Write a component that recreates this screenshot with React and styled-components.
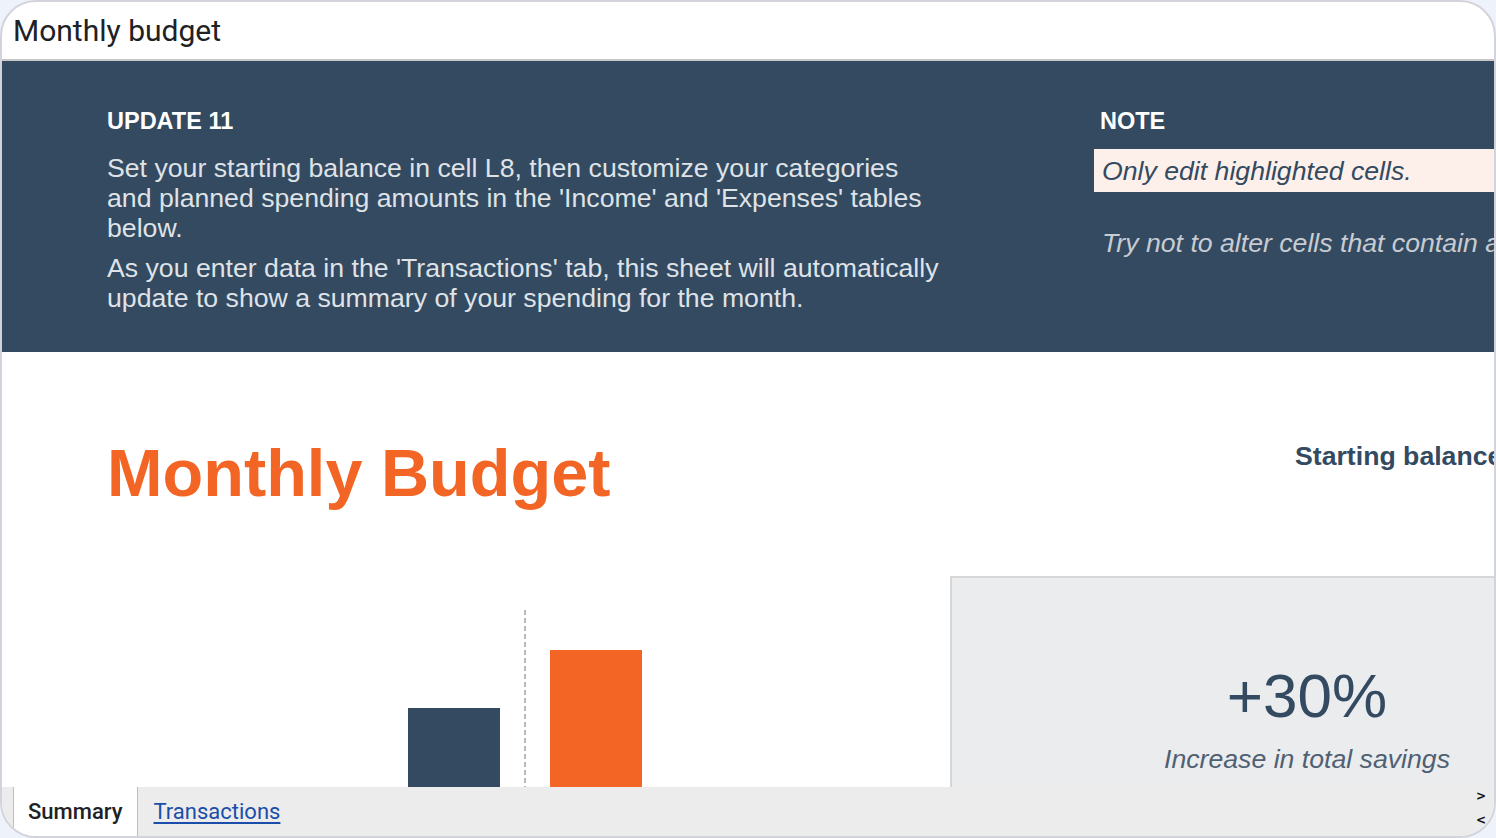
import React from "react";
import styled, { createGlobalStyle } from "styled-components";

const GlobalStyle = createGlobalStyle`
  html, body {
    margin: 0;
    padding: 0;
    background: #eef2fb;
  }
  * {
    box-sizing: border-box;
  }
`;

const NAVY = "#334a61";
const ORANGE = "#f36524";

const Frame = styled.div`
  width: 1496px;
  height: 838px;
  border: 2px solid #d3d3db;
  border-radius: 36px;
  overflow: hidden;
  background: #fff;
  display: flex;
  flex-direction: column;
  font-family: "Liberation Sans", Arial, sans-serif;
`;

const TitleBar = styled.div`
  flex: 0 0 59px;
  border-bottom: 2px solid #c8c8c8;
  padding-left: 11px;
  font-family: Roboto, "Liberation Sans", sans-serif;
  font-size: 30px;
  line-height: 57px;
  color: #202124;
`;

const Sheet = styled.div`
  flex: 1;
  min-height: 0;
  overflow: hidden;
  display: flex;
  flex-direction: column;
`;

const Banner = styled.section`
  flex: 0 0 291px;
  background: ${NAVY};
  padding: 46px 0 0 105px;
  display: grid;
  grid-template-columns: 835px 1fr;
  column-gap: 152px;
  overflow: hidden;
`;

const BannerCol = styled.div`
  min-width: 0;
  overflow: hidden;
`;

const BannerHeading = styled.h2`
  margin: 0 0 ${(p) => p.$gap}px ${(p) => p.$indent || 0}px;
  font-size: 23.5px;
  line-height: 28px;
  font-weight: 700;
  color: #fff;
`;

const Paragraph = styled.p`
  margin: 0 0 10px;
  font-size: 26.67px;
  line-height: 30px;
  color: #dfe2e6;
`;

const Highlight = styled.div`
  background: #fdf0eb;
  padding: 5px 0 4px 8px;
  font-size: 26.67px;
  line-height: 34px;
  font-style: italic;
  color: ${NAVY};
  white-space: nowrap;
`;

const NoteText = styled.div`
  margin-top: 36px;
  padding-left: 8px;
  font-size: 26.67px;
  line-height: 30px;
  font-style: italic;
  color: #c8ccd2;
  white-space: nowrap;
`;

const Body = styled.section`
  flex: 1;
  display: flex;
  min-height: 0;
`;

const LeftCol = styled.div`
  flex: 0 0 948px;
  padding-top: 88px;
`;

const RightCol = styled.div`
  flex: 1;
  min-width: 0;
  overflow: hidden;
  padding-top: 91px;
`;

const Title = styled.h1`
  margin: 0 0 0 105px;
  font-size: 66.67px;
  line-height: 1;
  font-weight: 700;
  color: ${ORANGE};
`;

const Chart = styled.div`
  margin-top: 103px;
  height: 300px;
  padding-left: 406px;
  display: flex;
  align-items: flex-end;
  gap: 24px;
`;

const Bar = styled.div`
  width: 92px;
  height: ${(p) => p.$height}px;
  background: ${(p) => p.$color};
`;

const Divider = styled.div`
  align-self: stretch;
  width: 2px;
  background: repeating-linear-gradient(
    to bottom,
    #b9b9b9 0 5px,
    transparent 5px 8px
  );
`;

const StartLabel = styled.div`
  padding-left: 345px;
  font-size: 26.67px;
  line-height: 1;
  font-weight: 700;
  color: ${NAVY};
  white-space: nowrap;
`;

const Card = styled.div`
  margin-top: 106px;
  width: 712px;
  height: 300px;
  background: #ebecee;
  border-top: 2px solid #d6d6d6;
  border-left: 2px solid #d6d6d6;
  padding-top: 87px;
  text-align: center;
  color: ${NAVY};
`;

const BigStat = styled.div`
  font-size: 62px;
  line-height: 1;
`;

const StatCaption = styled.div`
  margin-top: 19px;
  font-size: 26.67px;
  line-height: 1;
  font-style: italic;
  color: #4f6073;
`;

const TabBar = styled.nav`
  flex: 0 0 49px;
  background: #ececec;
  display: flex;
  align-items: stretch;
  padding-left: 11px;
  font-family: Roboto, "Liberation Sans", sans-serif;
  font-size: 22px;
  line-height: 49px;
`;

const Tab = styled.div`
  background: #fff;
  border-left: 1px solid #bdbdbd;
  border-right: 1px solid #bdbdbd;
  padding: 0 14px;
  font-weight: 500;
  color: #202124;
`;

const TabLink = styled.a`
  margin-left: 16px;
  color: #1a4eaa;
  text-decoration: underline;
  text-underline-offset: 3px;
`;

const Scroller = styled.div`
  margin-left: auto;
  padding: 3px 8px 0 0;
  display: flex;
  flex-direction: column;
  gap: 12px;
  font-family: "DejaVu Sans", sans-serif;
  font-size: 12px;
  font-weight: 700;
  line-height: 12px;
  color: #111;
`;

export default function App() {
  return (
    <>
      <GlobalStyle />
      <Frame>
        <TitleBar>Monthly budget</TitleBar>
        <Sheet>
          <Banner>
            <BannerCol>
              <BannerHeading $gap={18}>UPDATE 11</BannerHeading>
              <Paragraph>
                Set your starting balance in cell L8, then customize your
                categories and planned spending amounts in the 'Income' and
                'Expenses' tables below.
              </Paragraph>
              <Paragraph>
                As you enter data in the 'Transactions' tab, this sheet will
                automatically update to show a summary of your spending for
                the month.
              </Paragraph>
            </BannerCol>
            <BannerCol>
              <BannerHeading $gap={14} $indent={6}>
                NOTE
              </BannerHeading>
              <Highlight>Only edit highlighted cells.</Highlight>
              <NoteText>Try not to alter cells that contain a formula.</NoteText>
            </BannerCol>
          </Banner>
          <Body>
            <LeftCol>
              <Title>Monthly Budget</Title>
              <Chart>
                <Bar $color={NAVY} $height={202} />
                <Divider />
                <Bar $color={ORANGE} $height={260} />
              </Chart>
            </LeftCol>
            <RightCol>
              <StartLabel>Starting balance</StartLabel>
              <Card>
                <BigStat>+30%</BigStat>
                <StatCaption>Increase in total savings</StatCaption>
              </Card>
            </RightCol>
          </Body>
        </Sheet>
        <TabBar>
          <Tab>Summary</Tab>
          <TabLink href="#transactions">Transactions</TabLink>
          <Scroller>
            <span>&gt;</span>
            <span>&lt;</span>
          </Scroller>
        </TabBar>
      </Frame>
    </>
  );
}
